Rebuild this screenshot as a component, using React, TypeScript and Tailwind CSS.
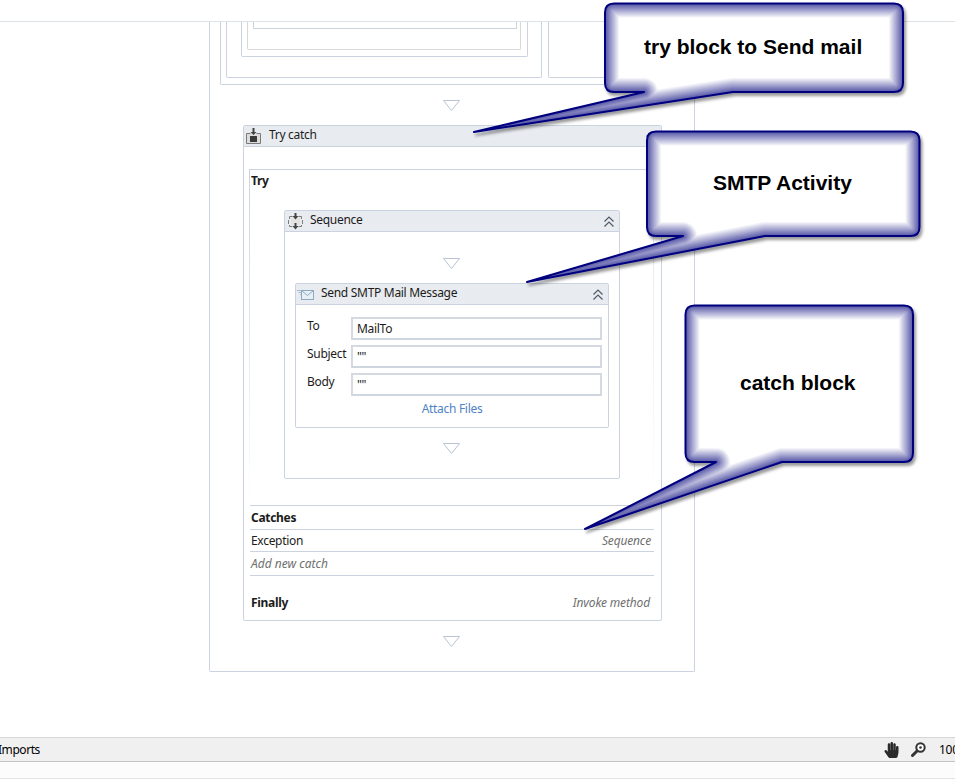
import { FC, ReactNode } from "react";
import { FaHandPaper } from "react-icons/fa";

const line = "border-[#cbd3e1]";

const DropArrow: FC = () => (
  <svg width="17" height="11" viewBox="0 0 17 11" className="block">
    <path d="M0.5 0.5H16.5L8.5 10.5Z" fill="#fff" stroke="#b9c3d3" />
  </svg>
);

const Chevrons: FC = () => (
  <svg width="10" height="11" viewBox="0 0 10 11" className="block shrink-0">
    <path d="M0.5 5.5L5 1L9.5 5.5M0.5 10.5L5 6L9.5 10.5" fill="none" stroke="#4f5a66" strokeWidth="1.2" />
  </svg>
);

const TryIcon: FC = () => (
  <svg width="15" height="16" viewBox="0 0 15 16" className="block shrink-0">
    <path d="M4.5 5.5H0.5V15.5H14.5V5.5H10.5" fill="#dcdcdc" stroke="#7a7a7a" />
    <rect x="4" y="8" width="7" height="6" fill="#3a3a3a" />
    <path d="M6.5 0V4H4.5L7.5 7L10.5 4H8.5V0Z" fill="#444" />
  </svg>
);

const SeqIcon: FC = () => (
  <svg width="15" height="17" viewBox="0 0 15 17" className="block shrink-0">
    <path d="M4.5 3.5H1.5V6M0.5 7V11M1.5 12V13.5H4.5M10.5 3.5H13.5V6M14.5 7V11M13.5 12V13.5H10.5" fill="none" stroke="#7d7d7d" />
    <rect x="3" y="5" width="9" height="7" fill="#e2e2e2" />
    <path d="M6.5 0V3H4.5L7.5 6.5L10.5 3H8.5V0Z" fill="#444" />
    <path d="M6.5 10V13H4.5L7.5 16.5L10.5 13H8.5V10Z" fill="#444" />
  </svg>
);

const MailIcon: FC = () => (
  <svg width="17" height="11" viewBox="0 0 17 11" className="block shrink-0">
    <path d="M0 1.5H5M1.5 3.5H5M3 5.5H5" stroke="#a9bccd" />
    <rect x="4.5" y="1.5" width="12" height="9" fill="#e6eff6" stroke="#8fa9bf" />
    <path d="M4.5 1.5L10.5 6.5L16.5 1.5" fill="none" stroke="#8fa9bf" />
  </svg>
);

const ZoomIcon: FC = () => (
  <svg width="15" height="15" viewBox="0 0 15 15" className="block shrink-0">
    <circle cx="9.5" cy="5.5" r="4.2" fill="#fff" stroke="#333" strokeWidth="2" />
    <circle cx="9.5" cy="5.5" r="1.3" fill="#333" />
    <path d="M6 9L1.5 13.5" stroke="#333" strokeWidth="3" strokeLinecap="round" />
  </svg>
);

const Header: FC<{ icon: ReactNode; title: string; iconWidth: string }> = ({ icon, title, iconWidth }) => (
  <div className={`h-[21px] flex items-center border-b ${line} bg-[#e8ebef] pr-[5px]`}>
    <div className={`${iconWidth} flex justify-end`}>{icon}</div>
    <span className="flex-1 leading-4 pb-[2px]">{title}</span>
    <Chevrons />
  </div>
);

const fields = [
  { label: "To", value: "MailTo" },
  { label: "Subject", value: '""' },
  { label: "Body", value: '""' },
];

const SmtpActivity: FC = () => (
  <div className={`ml-[10px] w-[314px] h-[145px] border ${line} rounded-[2px]`}>
    <Header icon={<MailIcon />} title="Send SMTP Mail Message" iconWidth="w-[18px] mr-[7px]" />
    <div className="pt-[12px] pl-[11px] flex flex-col gap-[5px]">
      {fields.map((f) => (
        <div key={f.label} className="flex h-[23px]">
          <span className="w-[44px] leading-4 pt-[1px]">{f.label}</span>
          <div className="w-[251px] border-2 border-[#d5dae2] border-b-[#cfd6e0] flex items-center pl-[4px] leading-4">
            {f.value}
          </div>
        </div>
      ))}
    </div>
    <div className="mt-[5px] text-center leading-4 text-[#4f83c4]">Attach Files</div>
  </div>
);

const SequenceBlock: FC = () => (
  <div className={`ml-[34px] mt-[21px] w-[336px] h-[269px] border ${line} rounded-[2px]`}>
    <Header icon={<SeqIcon />} title="Sequence" iconWidth="w-[18px] mr-[7px]" />
    <div className="mt-[26px] pr-[1px] flex justify-center">
      <DropArrow />
    </div>
    <div className="mt-[14px]">
      <SmtpActivity />
    </div>
    <div className="mt-[15px] pr-[1px] flex justify-center">
      <DropArrow />
    </div>
  </div>
);

const TryCatch: FC = () => (
  <div className={`ml-[33px] w-[419px] h-[496px] border ${line} rounded-[2px]`}>
    <Header icon={<TryIcon />} title="Try catch" iconWidth="w-[17px] mr-[8px]" />
    <div className="ml-[5px] w-[405px] mt-[22px]">
      <div className={`h-[336px] border-t ${line} flex`}>
        <div className="w-px bg-gradient-to-b from-[#cbd3e1] to-white" />
        <div className="flex-1 pt-[3px]">
          <div className="pl-[1px] font-bold leading-4">Try</div>
          <SequenceBlock />
        </div>
        <div className="w-px bg-gradient-to-b from-[#dfe4ec] to-white" />
      </div>
      <div className={`ml-px h-[24px] border-t ${line} pl-[1px] flex items-center font-bold`}>Catches</div>
      <div className={`ml-px h-[22px] border-t ${line} pl-[1px] flex items-center justify-between pr-[3px]`}>
        <span>Exception</span>
        <span className="italic tracking-[-0.15px] text-[#6f6f6f]">Sequence</span>
      </div>
      <div className={`ml-px h-[25px] border-t border-b ${line} pl-[1px] flex items-center italic tracking-normal text-[#6f6f6f]`}>Add new catch</div>
      <div className="ml-px h-[44px] pl-[1px] flex items-center justify-between pr-[4px] pt-[10px]">
        <span className="font-bold">Finally</span>
        <span className="italic tracking-[-0.15px] text-[#6f6f6f]">Invoke method</span>
      </div>
    </div>
  </div>
);

const ClippedBoxes: FC = () => (
  <div className={`ml-[10px] w-[464px] h-[63px] border-x border-b ${line} rounded-b-[2px] pl-[5px] flex gap-[6px]`}>
    <div className={`w-[316px] h-[56px] border-x border-b ${line} rounded-b-[2px] pl-[14px]`}>
      <div className={`w-[287px] h-[35px] border-x border-b ${line} rounded-b-[2px] pl-[5px]`}>
        <div className="w-[274px] h-[28px] border-x border-b border-[#d9d9d9] rounded-b-[2px] pl-[5px]">
          <div className={`w-[264px] h-[7px] border-x border-b ${line} rounded-b-[1px]`} />
        </div>
      </div>
    </div>
    <div className={`w-[130px] h-[56px] border-x border-b ${line} rounded-b-[2px]`} />
  </div>
);

// speech bubble outline, tail hangs off the bottom edge
const bubblePath = (x1: number, y1: number, x2: number, y2: number, a: number, tip: [number, number], b: number) => {
  const r = 9;
  return `M${x1 + r} ${y1}H${x2 - r}Q${x2} ${y1} ${x2} ${y1 + r}V${y2 - r}Q${x2} ${y2} ${x2 - r} ${y2}H${b}L${tip[0]} ${tip[1]}L${a} ${y2}H${x1 + r}Q${x1} ${y2} ${x1} ${y2 - r}V${y1 + r}Q${x1} ${y1} ${x1 + r} ${y1}Z`;
};

const bubbles = [
  { id: "b1", d: bubblePath(605, 3.5, 903, 92, 644, [474, 132], 733) },
  { id: "b2", d: bubblePath(647, 131.5, 919.5, 236, 683, [527, 282], 765) },
  { id: "b3", d: bubblePath(685.5, 305.5, 913, 462, 716, [585, 529], 782) },
];

const glow = Array.from({ length: 15 }, (_, i) => {
  const t = i / 14;
  const c = (from: number, to: number) => Math.round(from + (to - from) * t);
  return { width: (15 - i) * 2, color: `rgb(${c(255, 88)},${c(255, 88)},${c(255, 168)})` };
});

const Callouts: FC = () => (
  <svg width="955" height="779" viewBox="0 0 955 779" className="absolute left-0 top-0 pointer-events-none">
    <defs>
      <filter id="shade" x="-10%" y="-10%" width="120%" height="120%">
        <feDropShadow dx="2" dy="3" stdDeviation="1.5" floodColor="#000" floodOpacity="0.4" />
      </filter>
      {bubbles.map((b) => (
        <clipPath key={b.id} id={b.id}>
          <path d={b.d} />
        </clipPath>
      ))}
    </defs>
    {bubbles.map((b) => (
      <g key={b.id} filter="url(#shade)">
        <path d={b.d} fill="#fff" />
        <g clipPath={`url(#${b.id})`}>
          {glow.map((g) => (
            <path key={g.width} d={b.d} fill="none" stroke={g.color} strokeWidth={g.width} strokeLinejoin="round" />
          ))}
        </g>
        <path d={b.d} fill="none" stroke="#00007f" strokeWidth="2" strokeLinejoin="round" />
      </g>
    ))}
  </svg>
);

const calloutText = "absolute whitespace-nowrap font-['Liberation_Sans',Arial,sans-serif] font-bold text-[21px] tracking-normal leading-6 text-black";

export default function App() {
  return (
    <div className="relative w-[955px] h-[779px] overflow-hidden bg-white flex flex-col font-['Noto_Sans','Open_Sans',sans-serif] text-[12px] tracking-[-0.3px] text-[#1b1b1b]">
      <div className="h-[22px] shrink-0 border-b border-[#dde1e8]" />
      <div className="h-[715px] shrink-0">
        <div className={`ml-[209px] w-[486px] h-[650px] border-x border-b ${line} rounded-b-[2px]`}>
          <ClippedBoxes />
          <div className="mt-[15px] mb-[14px] pr-[1px] flex justify-center">
            <DropArrow />
          </div>
          <TryCatch />
          <div className="mt-[15px] pr-[1px] flex justify-center">
            <DropArrow />
          </div>
        </div>
      </div>
      <div className="h-[25px] shrink-0 border-y border-t-[#d6d6d6] border-b-[#c4c4c4] bg-[#f0f0f0] flex items-center">
        <span className="-ml-[2px] tracking-[-0.45px] text-black">Imports</span>
        <div className="flex-1" />
        <div className="w-[71px] shrink-0 flex items-center whitespace-nowrap">
          <FaHandPaper className="w-[15px] h-[16px] text-[#2b2b2b] shrink-0" />
          <div className="ml-[12px]">
            <ZoomIcon />
          </div>
          <span className="ml-[13px] text-black">100%</span>
        </div>
      </div>
      <div className="h-[17px] shrink-0 border-b border-[#e3e3e3] bg-[#fcfcfc]" />
      <Callouts />
      <div className={`${calloutText} left-[644px] top-[35px]`}>try block to Send mail</div>
      <div className={`${calloutText} left-[713px] top-[171px]`}>SMTP Activity</div>
      <div className={`${calloutText} left-[740px] top-[371px]`}>catch block</div>
    </div>
  );
}
